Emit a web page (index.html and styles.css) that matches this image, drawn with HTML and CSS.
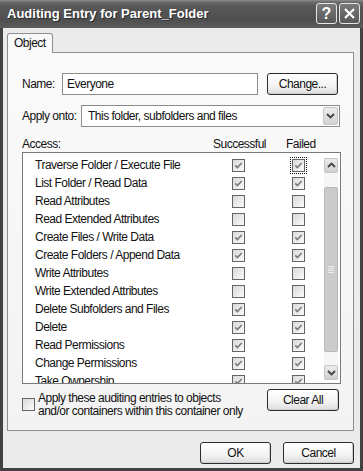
FILE: index.html
```html
<!DOCTYPE html>
<html lang="en">
<head>
  <meta charset="UTF-8">
  <meta name="viewport" content="width=device-width, initial-scale=1.0">
  <title>Auditing Entry for Parent_Folder</title>
  <link rel="stylesheet" href="styles.css">
</head>
<body>
  <div class="window">
    <div class="titlebar">
      <span class="title">Auditing Entry for Parent_Folder</span>
      <div class="title-buttons">
        <span class="title-btn">?</span>
        <span class="title-btn">
          <svg width="13" height="13" viewBox="0 0 13 13"><path d="M2 2 L11 11 M11 2 L2 11" stroke="#fff" stroke-width="2.2" fill="none"/></svg>
        </span>
      </div>
    </div>

    <div class="frame">
      <div class="tabs"><div class="tab">Object</div></div>

      <div class="panel">
        <div class="name-row">
          <span class="field-label name-label">Name:</span>
          <div class="textbox">Everyone</div>
          <button class="btn change-btn">Change...</button>
        </div>

        <div class="apply-row">
          <span class="field-label apply-label">Apply onto:</span>
          <div class="combo">
            <span class="combo-text">This folder, subfolders and files</span>
            <span class="combo-arrow">
              <svg width="9" height="6" viewBox="0 0 9 6"><path d="M1 1 L4.5 4.5 L8 1" stroke="#444" stroke-width="1.8" fill="none"/></svg>
            </span>
          </div>
        </div>

        <div class="access-head">
          <span class="head-access">Access:</span>
          <span class="head-success">Successful</span>
          <span>Failed</span>
        </div>

        <div class="listbox">
          <div class="items">
            <div class="row"><span class="row-label">Traverse Folder / Execute File</span><span class="cb on"></span><span class="cb on focus"></span></div>
            <div class="row"><span class="row-label">List Folder / Read Data</span><span class="cb on"></span><span class="cb on"></span></div>
            <div class="row"><span class="row-label">Read Attributes</span><span class="cb"></span><span class="cb"></span></div>
            <div class="row"><span class="row-label">Read Extended Attributes</span><span class="cb"></span><span class="cb"></span></div>
            <div class="row"><span class="row-label">Create Files / Write Data</span><span class="cb on"></span><span class="cb on"></span></div>
            <div class="row"><span class="row-label">Create Folders / Append Data</span><span class="cb on"></span><span class="cb on"></span></div>
            <div class="row"><span class="row-label">Write Attributes</span><span class="cb"></span><span class="cb"></span></div>
            <div class="row"><span class="row-label">Write Extended Attributes</span><span class="cb"></span><span class="cb"></span></div>
            <div class="row"><span class="row-label">Delete Subfolders and Files</span><span class="cb on"></span><span class="cb on"></span></div>
            <div class="row"><span class="row-label">Delete</span><span class="cb on"></span><span class="cb on"></span></div>
            <div class="row"><span class="row-label">Read Permissions</span><span class="cb on"></span><span class="cb on"></span></div>
            <div class="row"><span class="row-label">Change Permissions</span><span class="cb on"></span><span class="cb on"></span></div>
            <div class="row"><span class="row-label">Take Ownership</span><span class="cb on"></span><span class="cb on"></span></div>
          </div>
          <div class="scrollbar">
            <span class="scroll-btn">
              <svg width="9" height="6" viewBox="0 0 9 6"><path d="M1 5 L4.5 1.5 L8 5" stroke="#444" stroke-width="1.8" fill="none"/></svg>
            </span>
            <span class="thumb"><span class="grip"></span></span>
            <span class="scroll-btn">
              <svg width="9" height="6" viewBox="0 0 9 6"><path d="M1 1 L4.5 4.5 L8 1" stroke="#444" stroke-width="1.8" fill="none"/></svg>
            </span>
          </div>
        </div>

        <div class="bottom-row">
          <div class="only-wrap">
            <span class="cb only-cb"></span>
            <span class="only-text">Apply these auditing entries to objects<br>and/or containers within this container only</span>
          </div>
          <button class="btn clear-btn">Clear All</button>
        </div>
      </div>

      <div class="footer">
        <button class="btn">OK</button>
        <button class="btn">Cancel</button>
      </div>
    </div>
  </div>

  <script>
    // checked boxes get the grey tick
    document.querySelectorAll('.cb.on').forEach(cb => {
      cb.innerHTML = '<svg width="11" height="11" viewBox="0 0 11 11"><path d="M2.3 5.3 L4.4 7.5 L8.7 3" stroke="#7d7d7d" stroke-width="1.7" fill="none"/></svg>';
    });
  </script>
</body>
</html>
```

FILE: styles.css
```css
* {
  margin: 0;
  padding: 0;
  box-sizing: border-box;
}

body {
  font-family: "Liberation Sans", Arial, sans-serif;
  font-size: 12px;
  letter-spacing: -0.5px;
  color: #111;
  background: #fff;
}

.window {
  width: 363px;
  height: 471px;
  display: flex;
  flex-direction: column;
}

/* title bar */
.titlebar {
  height: 28px;
  display: flex;
  justify-content: space-between;
  padding: 0 3px 0 7px;
  background: linear-gradient(#8c8c8c 0, #6c6c6c 2px, #585858 6px, #4f4f4f 20px, #5c5c5c 28px);
}

.title {
  color: #fff;
  font-weight: bold;
  font-size: 13px;
  letter-spacing: 0;
  line-height: 28px;
  text-shadow: 1px 1px #2a2a2a;
}

.title-buttons {
  display: flex;
  gap: 2px;
  margin-top: 3px;
}

.title-btn {
  width: 21px;
  height: 21px;
  border: 1px solid #e6e6e6;
  border-radius: 3px;
  background: linear-gradient(#7a7a7a, #585858);
  color: #fff;
  font-weight: bold;
  font-size: 16px;
  letter-spacing: 0;
  display: flex;
  align-items: center;
  justify-content: center;
}

/* dialog body */
.frame {
  flex: 1;
  display: flex;
  flex-direction: column;
  background: #ebebeb;
  border: 3px solid #424242;
  border-top: none;
  padding: 5px 6px 0 4px;
}

.tabs {
  display: flex;
}

.tab {
  width: 46px;
  height: 20px;
  margin-bottom: -1px;
  padding-left: 6px;
  line-height: 19px;
  background: #f9f9f9;
  border: 1px solid #8e8e8e;
  border-bottom: none;
  border-radius: 3px 3px 0 0;
  position: relative;
  z-index: 1;
}

.panel {
  height: 379px;
  border: 1px solid #8e8e8e;
  background: linear-gradient(#fafafa, #f3f3f3);
  padding: 20px 13px 0 14px;
}

.field-label {
  flex: none;
}

.name-row {
  display: flex;
  align-items: center;
  height: 22px;
}

.name-label {
  width: 40px;
}

.textbox {
  width: 196px;
  height: 22px;
  border: 1px solid #8c8c8c;
  background: #fff;
  padding-left: 4px;
  display: flex;
  align-items: center;
}

.btn {
  font: inherit;
  letter-spacing: inherit;
  color: #111;
  width: 71px;
  height: 22px;
  border: 1px solid #2c2c2c;
  border-radius: 3px;
  background: linear-gradient(#ffffff, #f3f3f3 60%, #dcdcdc);
  box-shadow: inset -1px -1px #cfcfcf;
}

.change-btn {
  margin-left: 9px;
}

.apply-row {
  display: flex;
  align-items: center;
  margin-top: 10px;
  height: 22px;
}

.apply-label {
  width: 59px;
}

.combo {
  width: 259px;
  height: 22px;
  border: 1px solid #8c8c8c;
  background: #fff;
  display: flex;
  align-items: center;
  justify-content: space-between;
  padding: 1px;
}

.combo-text {
  padding-left: 5px;
}

.combo-arrow {
  width: 15px;
  height: 18px;
  border: 1px solid #c6c6c6;
  border-radius: 2px;
  background: linear-gradient(#ececec, #d2d2d2);
  display: flex;
  align-items: center;
  justify-content: center;
}

.access-head {
  display: flex;
  margin-top: 9px;
  height: 16px;
  line-height: 16px;
}

.head-access {
  width: 191px;
}

.head-success {
  width: 73px;
}

/* list of permissions */
.listbox {
  width: 319px;
  height: 232px;
  border: 1px solid #7a7a7a;
  background: #fff;
  display: flex;
}

.items {
  flex: 1;
  overflow: hidden;
  padding-top: 3px;
}

.row {
  height: 18px;
  display: flex;
  align-items: center;
}

.row-label {
  width: 209px;
  padding-left: 12px;
  flex: none;
}

.row .cb + .cb {
  margin-left: 47px;
}

.cb {
  width: 13px;
  height: 13px;
  flex: none;
  border: 1px solid #646464;
  background: linear-gradient(135deg, #d9d9d9, #fbfbfb);
  display: flex;
  align-items: center;
  justify-content: center;
}

.cb.focus {
  outline: 1px dotted #111;
  outline-offset: 1px;
}

.scrollbar {
  width: 14px;
  margin: 5px 2px 3px 0;
  display: flex;
  flex-direction: column;
  background: #f6f6f6;
}

.scroll-btn {
  height: 15px;
  border: 1px solid #c4c4c4;
  border-radius: 2px;
  background: linear-gradient(#ececec, #d0d0d0);
  display: flex;
  align-items: center;
  justify-content: center;
}

.thumb {
  height: 166px;
  margin: 14px 0 13px;
  border: 1px solid #b9b9b9;
  border-radius: 2px;
  background: #cbcbcb;
  display: flex;
  align-items: center;
  justify-content: center;
}

.grip {
  width: 6px;
  height: 7px;
  background: repeating-linear-gradient(#efefef 0, #efefef 1px, transparent 1px, transparent 2px);
}

/* bottom of the tab */
.bottom-row {
  display: flex;
  justify-content: space-between;
  margin-top: 5px;
  margin-right: 1px;
}

.only-wrap {
  display: flex;
}

.only-cb {
  margin-top: 9px;
}

.only-text {
  margin: 3px 0 0 3px;
  line-height: 13px;
}

.clear-btn {
  width: 72px;
}

.footer {
  display: flex;
  justify-content: flex-end;
  gap: 12px;
  margin-top: 11px;
}
```
